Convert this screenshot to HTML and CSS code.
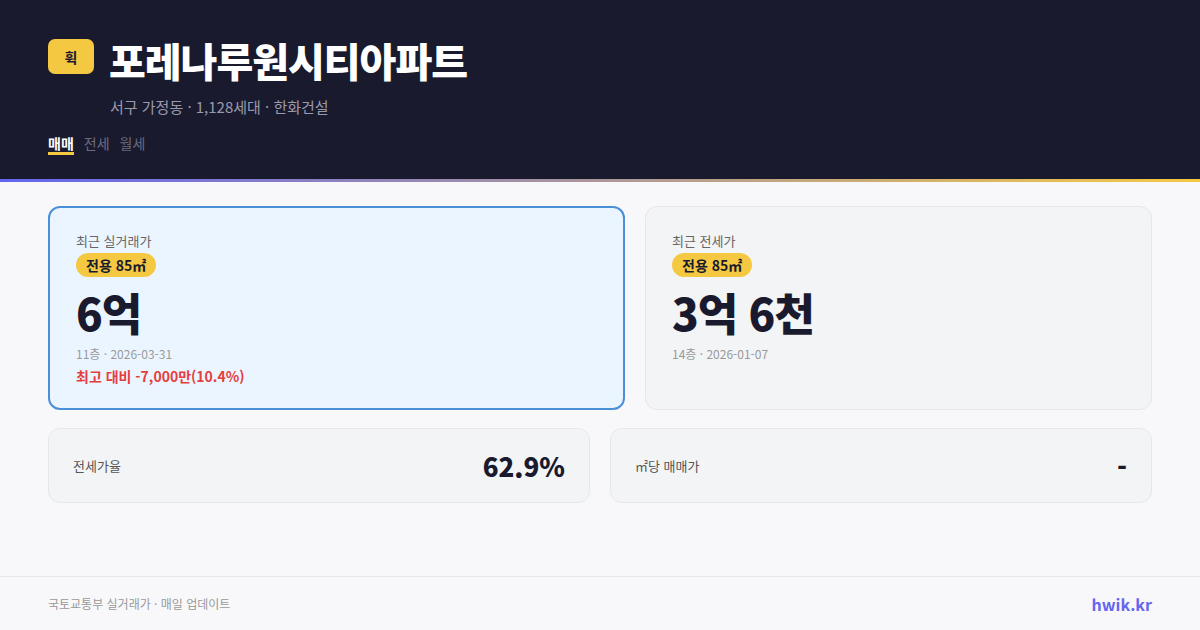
FILE: index.html
```html
<!DOCTYPE html>
<html lang="ko">
<head>
<meta charset="utf-8">
<link rel="stylesheet" href="styles.css">
</head>
<body>
<header class="hero">
  <div class="title-row">
    <span class="logo">휙</span>
    <h1 class="title">포레나루원시티아파트</h1>
  </div>
  <p class="sub">서구 가정동 · 1,128세대 · 한화건설</p>
  <nav class="tabs">
    <span class="tab active">매매</span>
    <span class="tab">전세</span>
    <span class="tab">월세</span>
  </nav>
</header>
<div class="bar"></div>
<main class="main">
  <section class="top">
    <div class="card card-hl">
      <div class="label">최근 실거래가</div>
      <span class="chip">전용 85㎡</span>
      <div class="price">6억</div>
      <div class="meta">11층 · 2026-03-31</div>
      <div class="delta">최고 대비 -7,000만(10.4%)</div>
    </div>
    <div class="card">
      <div class="label">최근 전세가</div>
      <span class="chip">전용 85㎡</span>
      <div class="price">3억 6천</div>
      <div class="meta">14층 · 2026-01-07</div>
    </div>
  </section>
  <section class="bottom">
    <div class="stat">
      <span class="stat-label">전세가율</span>
      <span class="stat-value">62.9%</span>
    </div>
    <div class="stat">
      <span class="stat-label">㎡당 매매가</span>
      <span class="stat-value">-</span>
    </div>
  </section>
</main>
<footer class="foot">
  <span class="src">국토교통부 실거래가 · 매일 업데이트</span>
  <span class="brand">hwik.kr</span>
</footer>
</body>
</html>
```
FILE: styles.css
```css
* { box-sizing: border-box; margin: 0; padding: 0; }
html, body { width: 1200px; height: 630px; overflow: hidden; }
body {
  font-family: "Noto Sans CJK KR", "Noto Sans", sans-serif;
  background: #f8f8fa;
  display: flex;
  flex-direction: column;
}
.hero {
  background: #1a1a2e;
  height: 179px;
  padding: 34px 48px 0;
}
.title-row { display: flex; align-items: flex-start; gap: 15px; }
.logo {
  margin-top: 5px;
  width: 46px; height: 35px;
  background: #f5c842;
  border-radius: 7px;
  display: flex; align-items: center; justify-content: center;
  font-size: 14px; font-weight: 700; color: #1a1a2e;
}
.title {
  font-size: 40px; font-weight: 800; color: #fff;
  letter-spacing: -1px; line-height: 52px;
}
.sub {
  margin: 10px 0 0 62px;
  font-size: 15px; color: #9a9aae; line-height: 22px;
}
.tabs { display: flex; gap: 10px; margin-top: 16px; }
.tab {
  font-size: 14px; color: #6b6b80; line-height: 18px;
  border-bottom: 3px solid transparent;
}
.tab.active { color: #fff; font-weight: 700; border-bottom-color: #f5c842; }
.bar { height: 3px; background: linear-gradient(90deg, #6366f1, #f5c842); }
.main { padding: 24px 48px 0; flex: 1; }
.top { display: grid; grid-template-columns: 577fr 507fr; gap: 20px; }
.card {
  height: 204px;
  background: #f3f4f6;
  border: 1px solid #e5e7eb;
  border-radius: 12px;
  padding: 24px 26px;
  display: flex; flex-direction: column; align-items: flex-start;
}
.card-hl { background: #ebf5ff; border: 2px solid #4a90d9; padding: 23px 26px; }
.label { font-size: 13px; color: #666; line-height: 19px; }
.chip {
  margin-top: 3px;
  background: #f5c842; color: #1a1a2e;
  font-size: 14px; font-weight: 700;
  border-radius: 12px; padding: 0 10px; line-height: 24px;
}
.price {
  font-size: 44px; font-weight: 800; color: #1a1a2e;
  line-height: 52px; letter-spacing: -1px; margin-top: 9px;
}
.meta { font-size: 12px; color: #999; line-height: 18px; margin-top: 7px; }
.delta { font-size: 14px; font-weight: 700; color: #e53e3e; line-height: 20px; margin-top: 3px; }
.bottom { display: grid; grid-template-columns: 1fr 1fr; gap: 20px; margin-top: 18px; }
.stat {
  height: 75px;
  background: #f3f4f6; border: 1px solid #e5e7eb; border-radius: 12px;
  padding: 0 24px;
  display: flex; align-items: center; justify-content: space-between;
}
.stat-label { font-size: 13px; color: #555; }
.stat-value { font-size: 26px; font-weight: 800; color: #1a1a2e; }
.foot {
  height: 54px;
  border-top: 1px solid #e5e7eb;
  padding: 0 48px;
  display: flex; align-items: center; justify-content: space-between;
}
.src { font-size: 12px; color: #999; }
.brand { font-size: 16px; font-weight: 700; color: #6366f1; }
```
